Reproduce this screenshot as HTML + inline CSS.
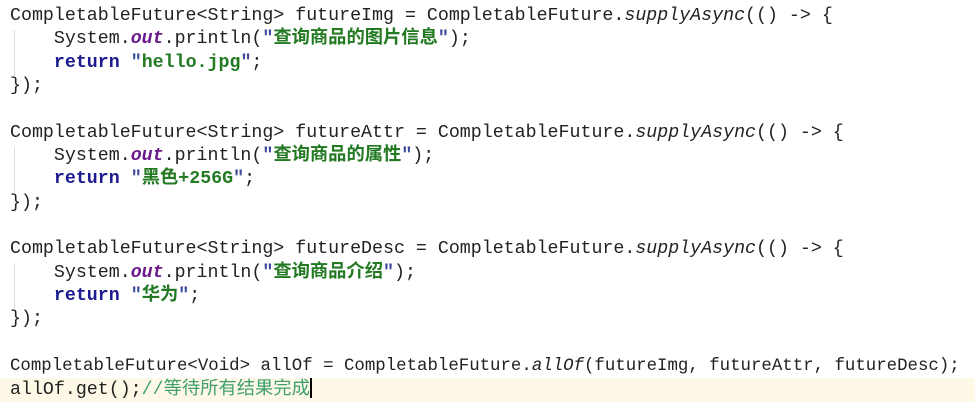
<!DOCTYPE html>
<html><head><meta charset="utf-8"><style>
html,body{margin:0;padding:0;background:#fff;width:975px;height:407px;overflow:hidden}
.c{position:absolute;left:10px;top:5px;font-family:"Liberation Mono","Noto Sans CJK SC",monospace;font-size:18.3px;line-height:23.33px;color:#222;white-space:pre}
.k{color:#1b1b8f;font-weight:bold}
.s{color:#237a23;font-weight:bold}
.q{color:#3a4a9a}
.o{color:#6a1a8a;font-style:italic;font-weight:bold}
.i{font-style:italic}
.cm{color:#3f9f6f}
.sm{font-size:17.4px}
.hl{position:absolute;left:0;top:378px;width:975px;height:24px;background:#fdf9e6}
.g{position:absolute;left:14px;width:1px;background:#ddd}
.cur{display:inline-block;width:2px;height:20px;background:#000;vertical-align:-4px}
</style></head><body>
<div class="hl"></div>
<div class="g" style="top:30px;height:46px"></div>
<div class="g" style="top:147px;height:46px"></div>
<div class="g" style="top:263px;height:46px"></div>
<div class="c">CompletableFuture&lt;String&gt; futureImg = CompletableFuture.<span class="i">supplyAsync</span>(() -&gt; {
    System.<span class="o">out</span>.println(<span class="s"><span class="q">"</span>查询商品的图片信息<span class="q">"</span></span>);
    <span class="k">return</span> <span class="s"><span class="q">"</span>hello.jpg<span class="q">"</span></span>;
});

CompletableFuture&lt;String&gt; futureAttr = CompletableFuture.<span class="i">supplyAsync</span>(() -&gt; {
    System.<span class="o">out</span>.println(<span class="s"><span class="q">"</span>查询商品的属性<span class="q">"</span></span>);
    <span class="k">return</span> <span class="s"><span class="q">"</span>黑色+256G<span class="q">"</span></span>;
});

CompletableFuture&lt;String&gt; futureDesc = CompletableFuture.<span class="i">supplyAsync</span>(() -&gt; {
    System.<span class="o">out</span>.println(<span class="s"><span class="q">"</span>查询商品介绍<span class="q">"</span></span>);
    <span class="k">return</span> <span class="s"><span class="q">"</span>华为<span class="q">"</span></span>;
});

<span class="sm">CompletableFuture&lt;Void&gt; allOf = CompletableFuture.<span class="i">allOf</span>(futureImg, futureAttr, futureDesc);</span>
allOf.get();<span class="cm">//等待所有结果完成</span><span class="cur"></span></div>
</body></html>
